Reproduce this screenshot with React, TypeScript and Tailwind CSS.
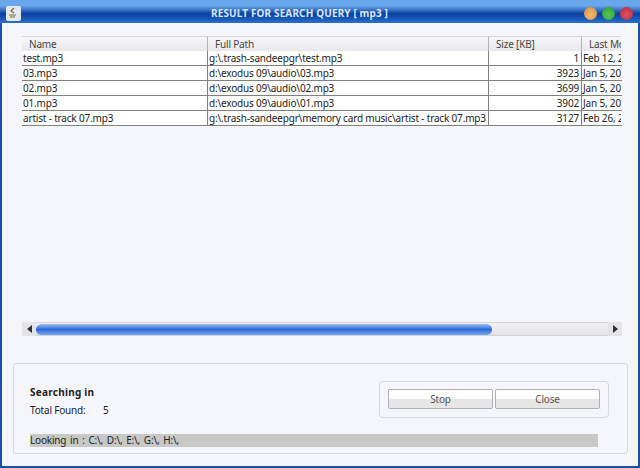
import React from "react";

const rows = [
  ["test.mp3", "g:\\.trash-sandeepgr\\test.mp3", "1", "Feb 12, 2009"],
  ["03.mp3", "d:\\exodus 09\\audio\\03.mp3", "3923", "Jan 5, 2009"],
  ["02.mp3", "d:\\exodus 09\\audio\\02.mp3", "3699", "Jan 5, 2009"],
  ["01.mp3", "d:\\exodus 09\\audio\\01.mp3", "3902", "Jan 5, 2009"],
  ["artist - track 07.mp3", "g:\\.trash-sandeepgr\\memory card music\\artist - track 07.mp3", "3127", "Feb 26, 2009"],
];

const Dot: React.FC<{ className: string }> = ({ className }) => (
  <div className={`w-[13px] h-[13px] rounded-full ${className}`} />
);

const HeaderCell: React.FC<{ className: string; label: string }> = ({ className, label }) => (
  <div className={`h-[15px] pl-[7px] leading-[15px] text-[#444] overflow-hidden whitespace-nowrap border-t border-[#d8d8dc] bg-gradient-to-b from-[#f7f7f9] to-[#e8e8ec] border-r border-r-[#b4b4b8] ${className}`}>
    {label}
  </div>
);

const PanelButton: React.FC<{ label: string }> = ({ label }) => (
  <div className="w-[105px] h-[20px] border border-[#b0b0b0] rounded-[2px] bg-gradient-to-b from-white from-50% to-[#e6e6e6] to-50% text-center leading-[18px] text-[#555]">
    {label}
  </div>
);

export default function App() {
  return (
    <div className="w-[640px] h-[468px] flex flex-col bg-[#1c4fa8] text-[10px] tracking-[-0.18px] text-[#222] font-['Noto_Sans',sans-serif] overflow-hidden">
      {/* title bar */}
      <div className="h-[23px] flex items-center pl-[6px] pr-[7px] bg-gradient-to-b from-[#6aa6ea] from-25% via-[#0a3f9e] via-60% to-[#2a70d0]">
        <div className="w-[15px] h-[15px] rounded-[2px] bg-[#e4e8f0] flex items-center justify-center mt-[3px]">
          <svg width="11" height="12" viewBox="0 0 11 12">
            <path d="M6 1 L3 4 L6 6 M1 8 H8 M2 10 H7" stroke="#7a6a30" strokeWidth="1.2" fill="none" />
          </svg>
        </div>
        <div className="flex-1 text-center text-[#d4e8fb] font-bold text-[10px] tracking-[0.13px] mt-[3px] pr-[6px]">RESULT FOR SEARCH QUERY [ mp3 ]</div>
        <div className="flex gap-[5px] mt-[3px]">
          <Dot className="bg-[radial-gradient(circle_at_50%_60%,#f4b878,#d88a38)]" />
          <Dot className="bg-[radial-gradient(circle_at_50%_60%,#58c858,#2a9a30)]" />
          <Dot className="bg-[radial-gradient(circle_at_50%_60%,#e05060,#b02c3c)]" />
        </div>
      </div>

      {/* body */}
      <div className="flex-1 mx-[2px] mb-[2px] bg-[#f4f6fb] flex flex-col pl-[11px] pr-[10px]">
        <div className="ml-[9px] mr-[6px] mt-[13px] h-[299px] flex flex-col">
          <div className="flex">
            <HeaderCell className="w-[186px]" label="Name" />
            <HeaderCell className="w-[281px]" label="Full Path" />
            <HeaderCell className="w-[93px]" label="Size [KB]" />
            <HeaderCell className="w-[39px] border-r-0" label="Last Modified" />
          </div>
          {rows.map((r) => (
            <div key={r[0]} className="flex h-[15px] leading-[14px] bg-white border-b border-[#808080] whitespace-nowrap">
              <div className="w-[186px] pl-px border-r border-[#808080]">{r[0]}</div>
              <div className="w-[281px] pl-px border-r border-[#808080]">{r[1]}</div>
              <div className="w-[93px] pr-[2px] text-right border-r border-[#808080]">{r[2]}</div>
              <div className="w-[39px] pl-[1px] overflow-hidden">{r[3]}</div>
            </div>
          ))}
        </div>

        {/* horizontal scrollbar */}
        <div className="ml-[9px] mr-[6px] mt-[-13px] h-[14px] flex items-center bg-gradient-to-b from-[#f2f2f4] to-[#e2e2e6] border-y border-[#d4d4d8]">
          <div className="w-[14px] h-[14px] flex items-center justify-center bg-[#e4e4e8]">
            <div className="w-0 h-0 border-y-[4px] border-y-transparent border-r-[5px] border-r-[#333]" />
          </div>
          <div className="w-[456px] h-[11px] rounded-full bg-gradient-to-b from-[#9cc0f0] via-[#2a68d8] to-[#7ca8ea]" />
          <div className="flex-1" />
          <div className="w-[14px] h-[14px] flex items-center justify-center bg-[#e4e4e8]">
            <div className="w-0 h-0 border-y-[4px] border-y-transparent border-l-[5px] border-l-[#333]" />
          </div>
        </div>

        {/* bottom panel */}
        <div className="mt-[27px] h-[91px] border border-[#d8d8dc] rounded-[3px] flex flex-col pl-[16px] pr-[17px]">
          <div className="flex h-[70px]">
            <div className="flex-1 pt-[22px]">
              <div className="font-bold leading-[13px] tracking-[0.25px]">Searching in</div>
              <div className="flex mt-[5px] leading-[13px]">
                <span className="w-[73px]">Total Found:</span>
                <span>5</span>
              </div>
            </div>
            <div className="mt-[17px] mr-[1px] h-[37px] w-[230px] pb-[2px] border border-[#d8d8dc] rounded-[4px] flex items-center justify-center gap-[2px]">
              <PanelButton label="Stop" />
              <PanelButton label="Close" />
            </div>
          </div>
          <div className="h-[13px] w-[568px] bg-[#c8c8c6] leading-[13px] [word-spacing:1.3px]">Looking in : C:\, D:\, E:\, G:\, H:\,</div>
        </div>
      </div>
    </div>
  );
}
